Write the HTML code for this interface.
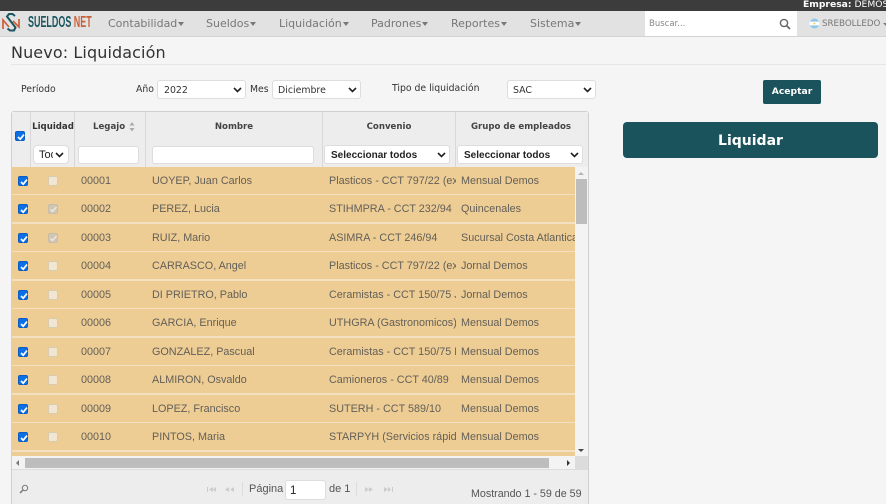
<!DOCTYPE html>
<html lang="es"><head><meta charset="utf-8"><title>Nuevo: Liquidación</title>
<style>
html,body{margin:0;padding:0}
body{width:886px;height:504px;overflow:hidden;background:#f5f5f5;position:relative;font-family:"DejaVu Sans","Liberation Sans",sans-serif;color:#333;filter:blur(.25px)}
.a{position:absolute;white-space:nowrap}
.nav{font-size:11px;color:#777;top:17px;line-height:14px}
.nav i{display:inline-block;width:0;height:0;border-left:3.5px solid transparent;border-right:3.5px solid transparent;border-top:4px solid #777;margin-left:1px;vertical-align:1px}
.lbl{font-size:9.3px;color:#333;line-height:12px}
.sel{position:absolute;background:#fff;border:1px solid #ddd;border-radius:3px;box-sizing:border-box;font-size:9.4px;color:#333;line-height:18px;padding-left:5px;white-space:nowrap;overflow:hidden}
.sel svg{position:absolute;right:3px;top:50%;margin-top:-3px}
.h{font-size:8.6px;font-weight:bold;color:#444;text-align:center;top:121px;line-height:12px}
.vl{position:absolute;width:1px;top:112px;height:55px;background:#d8d8d8}
.row{position:absolute;left:12px;width:563px;height:27px;background:#eecd95;border-bottom:2px solid #f2e0c0;font-family:"Liberation Sans",sans-serif;font-size:10.8px;color:#625f57;overflow:hidden}
.row span{position:absolute;top:8px;line-height:13px;white-space:nowrap;overflow:hidden}
.cb{position:absolute;left:6px;top:9px;width:10px;height:10px;background:#0b6fe8;border-radius:2px;border:.5px solid #0a5cc0;box-sizing:border-box}
.cb svg,.cd svg{position:absolute;left:0;top:0}
.cd{position:absolute;left:36px;top:9px;width:10px;height:10px;background:#f1e6d2;border:1px solid #d9cbb0;border-radius:2px;box-sizing:border-box}
.cd.on{background:#cfc6b4;border-color:#c9bda8}
.t{font-family:"Liberation Sans",sans-serif}
.fs{font-weight:bold;font-family:"Liberation Sans",sans-serif;font-size:10px;color:#222;line-height:19px;padding-left:6px}
</style></head><body>

<div class="a" style="left:0;top:0;width:886px;height:11px;background:#3c3c3c"></div>
<div class="a" style="left:803px;top:-1px;width:83px;font-size:9.2px;line-height:12px;color:#fff;overflow:hidden"><b>Empresa:</b> DEMOS</div>

<div class="a" style="left:0;top:11px;width:886px;height:25px;background:#e2e2e2;border-bottom:1px solid #d4d4d4"></div>

<svg class="a" style="left:0;top:11px" width="22" height="23" viewBox="0 0 22 23" fill="none">
<path d="M3 18V9l6 7" stroke="#c8613a" stroke-width="1.7"/>
<path d="M19 8v8l-6-6" stroke="#c8613a" stroke-width="1.7"/>
<path d="M15 5 12.5 3H9L7 5.5 15.5 16.5 14 19.5H10L7.5 17.5" stroke="#1b5660" stroke-width="2"/>
</svg>
<div class="a" style="left:28px;top:15px;font-family:'Liberation Sans',sans-serif;font-weight:bold;font-size:16px;line-height:16px;transform:scaleX(.56);transform-origin:0 0;color:#1b5660">SUELDOS <span style="color:#c8613a">NET</span></div>

<div class="a nav" style="left:108px">Contabilidad<i></i></div>
<div class="a nav" style="left:206px">Sueldos<i></i></div>
<div class="a nav" style="left:279px">Liquidación<i></i></div>
<div class="a nav" style="left:371px">Padrones<i></i></div>
<div class="a nav" style="left:451px">Reportes<i></i></div>
<div class="a nav" style="left:530px">Sistema<i></i></div>

<div class="a" style="left:645px;top:11px;width:152px;height:25px;background:#fff"></div>
<div class="a" style="left:649px;top:18px;font-size:8.5px;line-height:12px;color:#888">Buscar...</div>
<svg class="a" style="left:779px;top:18px" width="12" height="12" viewBox="0 0 12 12" fill="none"><circle cx="5" cy="5" r="3.6" stroke="#666" stroke-width="1.4"/><path d="M7.7 7.7 11 11" stroke="#666" stroke-width="1.7"/></svg>
<svg class="a" style="left:809px;top:18px" width="11" height="11" viewBox="0 0 11 11"><defs><clipPath id="f"><circle cx="5.5" cy="5.5" r="5"/></clipPath></defs><g clip-path="url(#f)"><rect width="11" height="11" fill="#fff"/><rect width="11" height="3.6" fill="#8ec5e8"/><rect y="7.4" width="11" height="3.6" fill="#8ec5e8"/><circle cx="5.5" cy="5.5" r="1" fill="#eecb6a"/></g></svg>
<div class="a" style="left:822px;top:18px;font-size:8.7px;line-height:12px;color:#777">SREBOLLEDO</div>
<div class="a" style="left:883px;top:23px;width:0;height:0;border-left:3px solid transparent;border-right:3px solid transparent;border-top:3px solid #777"></div>

<div class="a" style="left:11px;top:43px;font-size:16px;line-height:20px;color:#333;letter-spacing:.1px">Nuevo: Liquidación</div>
<div class="a" style="left:11px;top:64px;width:875px;height:1px;background:#e6e6e6"></div>

<div class="a lbl" style="left:21px;top:84px">Período</div>
<div class="a lbl" style="left:136px;top:84px">Año</div>
<div class="sel" style="left:157px;top:80px;width:89px;height:19px;padding-left:6px;line-height:19px">2022<svg width="9" height="6" viewBox="0 0 9 6" fill="none"><path d="M1 1l3.5 3.5L8 1" stroke="#222" stroke-width="1.6"/></svg></div>
<div class="a lbl" style="left:250px;top:84px">Mes</div>
<div class="sel" style="left:272px;top:80px;width:89px;height:19px;line-height:19px">Diciembre<svg width="9" height="6" viewBox="0 0 9 6" fill="none"><path d="M1 1l3.5 3.5L8 1" stroke="#222" stroke-width="1.6"/></svg></div>
<div class="a lbl" style="left:392px;top:83px">Tipo de liquidación</div>
<div class="sel" style="left:507px;top:80px;width:89px;height:19px;line-height:19px">SAC<svg width="9" height="6" viewBox="0 0 9 6" fill="none"><path d="M1 1l3.5 3.5L8 1" stroke="#222" stroke-width="1.6"/></svg></div>

<div class="a" style="left:763px;top:80px;width:58px;height:24px;background:#1a535c;border-radius:2px;color:#fff;font-size:9.2px;font-weight:bold;text-align:center;line-height:23px">Aceptar</div>
<div class="a" style="left:623px;top:122px;width:255px;height:36px;background:#1a535c;border-radius:4px;color:#fff;font-size:14px;font-weight:bold;text-align:center;line-height:38px">Liquidar</div>

<!-- grid -->
<div class="a" style="left:11px;top:111px;width:578px;height:393px;background:#fff;border:1px solid #cfcfcf;border-bottom:0;border-radius:3px 3px 0 0;box-sizing:border-box"></div>
<div class="a" style="left:12px;top:112px;width:576px;height:55px;background:#ededed"></div>
<div class="vl" style="left:30px"></div><div class="vl" style="left:74px"></div><div class="vl" style="left:145px"></div><div class="vl" style="left:322px"></div><div class="vl" style="left:455px"></div>

<div class="cb" style="left:15px;top:131px"><svg width="10" height="10" viewBox="0 0 10 10" fill="none"><path d="M2 5l2.2 2.2L8 2.6" stroke="#fff" stroke-width="1.7"/></svg></div>

<div class="a h" style="left:31px;width:44px;color:#333">Liquidad</div>
<div class="a h" style="left:93px">Legajo</div>
<svg class="a" style="left:129px;top:122px" width="6" height="10" viewBox="0 0 6 10"><path d="M3 0l2.5 3.5h-5zM3 9.5l2.5-3.5h-5z" fill="#aaa"/></svg>
<div class="a h" style="left:146px;width:176px">Nombre</div>
<div class="a h" style="left:323px;width:132px">Convenio</div>
<div class="a h" style="left:456px;width:130px">Grupo de empleados</div>

<div class="sel" style="left:33px;top:145px;width:36px;height:19px;padding-left:5px;font-size:11px;line-height:19px;font-family:'Liberation Sans',sans-serif;color:#222;border-radius:4px"><span style="display:block;width:14px;overflow:hidden">Todos</span><svg width="9" height="6" viewBox="0 0 9 6" fill="none" style="right:4px"><path d="M1 1l3.5 3.5L8 1" stroke="#222" stroke-width="1.6"/></svg></div>
<div class="sel" style="left:78px;top:146px;width:61px;height:18px"></div>
<div class="sel" style="left:152px;top:146px;width:162px;height:18px"></div>
<div class="sel fs" style="left:324px;top:145px;width:126px;height:19px">Seleccionar todos<svg width="9" height="6" viewBox="0 0 9 6" fill="none"><path d="M1 1l3.5 3.5L8 1" stroke="#222" stroke-width="1.6"/></svg></div>
<div class="sel fs" style="left:457px;top:145px;width:126px;height:19px">Seleccionar todos<svg width="9" height="6" viewBox="0 0 9 6" fill="none"><path d="M1 1l3.5 3.5L8 1" stroke="#222" stroke-width="1.6"/></svg></div>

<div class="row" style="top:167px"><div class="cb"><svg width="10" height="10" viewBox="0 0 10 10" fill="none"><path d="M2 5l2.2 2.2L8 2.6" stroke="#fff" stroke-width="1.7"/></svg></div><div class="cd"></div><span style="left:69px">00001</span><span style="left:140px">UOYEP, Juan Carlos</span><span style="left:317px;width:127px">Plasticos - CCT 797/22 (ex 419/05)</span><span style="left:449px;width:114px">Mensual Demos</span></div>
<div class="row" style="top:195px"><div class="cb"><svg width="10" height="10" viewBox="0 0 10 10" fill="none"><path d="M2 5l2.2 2.2L8 2.6" stroke="#fff" stroke-width="1.7"/></svg></div><div class="cd on"><svg width="9" height="9" viewBox="0 0 9 9" fill="none"><path d="M1.5 4.5l2 2L7.5 2" stroke="#efe9dc" stroke-width="1.4"/></svg></div><span style="left:69px">00002</span><span style="left:140px">PEREZ, Lucia</span><span style="left:317px;width:127px">STIHMPRA - CCT 232/94</span><span style="left:449px;width:114px">Quincenales</span></div>
<div class="row" style="top:224px"><div class="cb"><svg width="10" height="10" viewBox="0 0 10 10" fill="none"><path d="M2 5l2.2 2.2L8 2.6" stroke="#fff" stroke-width="1.7"/></svg></div><div class="cd on"><svg width="9" height="9" viewBox="0 0 9 9" fill="none"><path d="M1.5 4.5l2 2L7.5 2" stroke="#efe9dc" stroke-width="1.4"/></svg></div><span style="left:69px">00003</span><span style="left:140px">RUIZ, Mario</span><span style="left:317px;width:127px">ASIMRA - CCT 246/94</span><span style="left:449px;width:114px">Sucursal Costa Atlantica</span></div>
<div class="row" style="top:252px"><div class="cb"><svg width="10" height="10" viewBox="0 0 10 10" fill="none"><path d="M2 5l2.2 2.2L8 2.6" stroke="#fff" stroke-width="1.7"/></svg></div><div class="cd"></div><span style="left:69px">00004</span><span style="left:140px">CARRASCO, Angel</span><span style="left:317px;width:127px">Plasticos - CCT 797/22 (ex 419/05)</span><span style="left:449px;width:114px">Jornal Demos</span></div>
<div class="row" style="top:281px"><div class="cb"><svg width="10" height="10" viewBox="0 0 10 10" fill="none"><path d="M2 5l2.2 2.2L8 2.6" stroke="#fff" stroke-width="1.7"/></svg></div><div class="cd"></div><span style="left:69px">00005</span><span style="left:140px">DI PRIETRO, Pablo</span><span style="left:317px;width:127px">Ceramistas - CCT 150/75 Jornal</span><span style="left:449px;width:114px">Jornal Demos</span></div>
<div class="row" style="top:309px"><div class="cb"><svg width="10" height="10" viewBox="0 0 10 10" fill="none"><path d="M2 5l2.2 2.2L8 2.6" stroke="#fff" stroke-width="1.7"/></svg></div><div class="cd"></div><span style="left:69px">00006</span><span style="left:140px">GARCIA, Enrique</span><span style="left:317px;width:127px">UTHGRA (Gastronomicos) CCT</span><span style="left:449px;width:114px">Mensual Demos</span></div>
<div class="row" style="top:338px"><div class="cb"><svg width="10" height="10" viewBox="0 0 10 10" fill="none"><path d="M2 5l2.2 2.2L8 2.6" stroke="#fff" stroke-width="1.7"/></svg></div><div class="cd"></div><span style="left:69px">00007</span><span style="left:140px">GONZALEZ, Pascual</span><span style="left:317px;width:127px">Ceramistas - CCT 150/75 Mensual</span><span style="left:449px;width:114px">Mensual Demos</span></div>
<div class="row" style="top:366px"><div class="cb"><svg width="10" height="10" viewBox="0 0 10 10" fill="none"><path d="M2 5l2.2 2.2L8 2.6" stroke="#fff" stroke-width="1.7"/></svg></div><div class="cd"></div><span style="left:69px">00008</span><span style="left:140px">ALMIRON, Osvaldo</span><span style="left:317px;width:127px">Camioneros - CCT 40/89</span><span style="left:449px;width:114px">Mensual Demos</span></div>
<div class="row" style="top:395px"><div class="cb"><svg width="10" height="10" viewBox="0 0 10 10" fill="none"><path d="M2 5l2.2 2.2L8 2.6" stroke="#fff" stroke-width="1.7"/></svg></div><div class="cd"></div><span style="left:69px">00009</span><span style="left:140px">LOPEZ, Francisco</span><span style="left:317px;width:127px">SUTERH - CCT 589/10</span><span style="left:449px;width:114px">Mensual Demos</span></div>
<div class="row" style="top:423px"><div class="cb"><svg width="10" height="10" viewBox="0 0 10 10" fill="none"><path d="M2 5l2.2 2.2L8 2.6" stroke="#fff" stroke-width="1.7"/></svg></div><div class="cd"></div><span style="left:69px">00010</span><span style="left:140px">PINTOS, Maria</span><span style="left:317px;width:127px">STARPYH (Servicios rápidos)</span><span style="left:449px;width:114px">Mensual Demos</span></div>
<div class="a" style="left:12px;top:452px;width:563px;height:4px;background:#eecd95"></div>

<!-- vertical scrollbar -->
<div class="a" style="left:575px;top:167px;width:13px;height:289px;background:#f3f3f3"></div>
<div class="a" style="left:576px;top:179px;width:11px;height:45px;background:#bdbdbd"></div>
<div class="a" style="left:578px;top:172px;width:0;height:0;border-left:3px solid transparent;border-right:3px solid transparent;border-bottom:3px solid #b5b5b5"></div>
<div class="a" style="left:578px;top:449px;width:0;height:0;border-left:3px solid transparent;border-right:3px solid transparent;border-top:3px solid #444"></div>

<!-- horizontal scrollbar -->
<div class="a" style="left:12px;top:456px;width:563px;height:13px;background:#f3f3f3"></div>
<div class="a" style="left:575px;top:456px;width:13px;height:13px;background:#dcdcdc"></div>
<div class="a" style="left:25px;top:458px;width:524px;height:10px;background:#bdbdbd"></div>
<div class="a" style="left:16px;top:460px;width:0;height:0;border-top:3px solid transparent;border-bottom:3px solid transparent;border-right:3px solid #777"></div>
<div class="a" style="left:567px;top:460px;width:0;height:0;border-top:3px solid transparent;border-bottom:3px solid transparent;border-left:3px solid #333"></div>

<!-- footer -->
<div class="a" style="left:12px;top:469px;width:576px;height:35px;background:#ededed;border-top:1px solid #dcdcdc;box-sizing:border-box"></div>
<svg class="a" style="left:19px;top:484px" width="10" height="10" viewBox="0 0 10 10" fill="none"><circle cx="6" cy="4" r="2.7" stroke="#777" stroke-width="1"/><path d="M4 6 1 9" stroke="#777" stroke-width="1.5"/></svg>
<svg class="a" style="left:207px;top:486px" width="32" height="7" viewBox="0 0 32 7" fill="#ccc"><rect x="0" y="1" width="1" height="5"/><path d="M2 3.5 6 1v5zM6 3.5 9 1v5zM18 3.5 22 1v5zM23 3.5 27 1v5z"/></svg>
<div class="a" style="left:242px;top:482px;width:1px;height:14px;background:#dcdcdc"></div>
<div class="a t" style="left:249px;top:482px;font-size:11px;line-height:14px;color:#555">Página</div>
<div class="a t" style="left:285px;top:480px;width:41px;height:20px;background:#fff;border:1px solid #ddd;border-radius:3px;box-sizing:border-box;font-size:11.5px;line-height:20px;padding-left:4px;color:#222">1</div>
<div class="a t" style="left:329px;top:482px;font-size:11px;line-height:14px;color:#555">de 1</div>
<div class="a" style="left:356px;top:482px;width:1px;height:14px;background:#dcdcdc"></div>
<svg class="a" style="left:365px;top:486px" width="30" height="7" viewBox="0 0 30 7" fill="#ccc"><path d="M0 1l4 2.5L0 6zM4 1l4 2.5L4 6zM19 1l4 2.5L19 6zM23 1l3 2.5L23 6z"/><rect x="27" y="1" width="1" height="5"/></svg>
<div class="a t" style="left:471px;top:487px;font-size:10.7px;line-height:14px;color:#555">Mostrando 1 - 59 de 59</div>

</body></html>
